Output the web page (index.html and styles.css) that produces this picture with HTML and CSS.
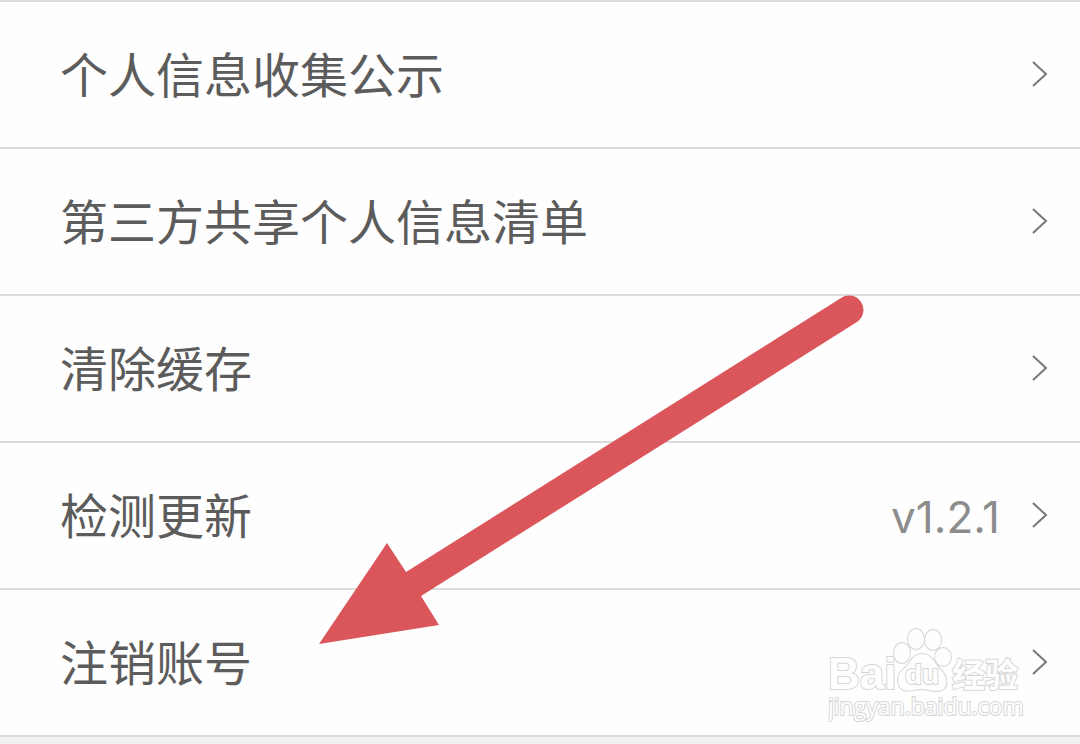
FILE: index.html
```html
<!DOCTYPE html>
<html lang="zh-CN">
<head>
	<meta charset="UTF-8">
	<meta name="viewport" content="width=device-width, initial-scale=1">
	<title>设置</title>
	<link rel="stylesheet" href="styles.css">
</head>
<body>
	<main class="settings">
		<nav class="list">
			<a class="row" href="#collect">
				<span class="label">个人信息收集公示</span>
				<svg class="chevron" viewBox="0 0 18 28"><path d="M3 2 L16 14 L3 26"/></svg>
			</a>
			<a class="row" href="#share">
				<span class="label">第三方共享个人信息清单</span>
				<svg class="chevron" viewBox="0 0 18 28"><path d="M3 2 L16 14 L3 26"/></svg>
			</a>
			<a class="row" href="#cache">
				<span class="label">清除缓存</span>
				<svg class="chevron" viewBox="0 0 18 28"><path d="M3 2 L16 14 L3 26"/></svg>
			</a>
			<a class="row" href="#update">
				<span class="label">检测更新</span>
				<span class="version">v1.2.1</span>
				<svg class="chevron" viewBox="0 0 18 28"><path d="M3 2 L16 14 L3 26"/></svg>
			</a>
			<a class="row" href="#cancel">
				<span class="label">注销账号</span>
				<svg class="chevron" viewBox="0 0 18 28"><path d="M3 2 L16 14 L3 26"/></svg>
			</a>
		</nav>

		<!-- arrow pointing at the last row -->
		<svg class="arrow" viewBox="0 0 546 350">
			<path d="M1 349 L69 248 L88 277 L523 3 A14 14 0 0 1 539 27 L103 301 L121 330 Z"/>
		</svg>

		<svg class="watermark" viewBox="0 0 200 96">
			<g class="mark">
				<text class="brand" x="0" y="62">Bai</text>
				<ellipse cx="74" cy="26" rx="8" ry="10"/>
				<ellipse cx="88" cy="12" rx="8" ry="10"/>
				<ellipse cx="105" cy="13" rx="8" ry="10"/>
				<ellipse cx="115" cy="30" rx="8" ry="9"/>
				<path d="M94 27 C84 27 82 37 76 42 C68 47 68 60 76 63 C82 65 88 62 94 62 C100 62 107 66 114 63 C121 59 119 48 112 42 C106 36 104 27 94 27 Z"/>
				<text class="du" x="77" y="57">du</text>
				<text class="cjk" x="124" y="60">经验</text>
				<text class="site" x="0" y="88">jingyan.baidu.com</text>
			</g>
		</svg>
	</main>
</body>
</html>
```
FILE: styles.css
```css
* {
	box-sizing: border-box;
}

body {
	margin: 0;
	background-color: #f1f1f1;
	font-family: "Noto Sans CJK SC", sans-serif;
}

.settings {
	position: relative;
}

.list {
	background-color: #fefefe;
	border-top: 2px solid #dcdcdc;
}

.row {
	display: flex;
	align-items: center;
	padding: 37px 32px 38px 60px;
	border-bottom: 2px solid #dcdcdc;
	color: #5c5c5c;
	text-decoration: none;
}

.label {
	flex: 1;
	padding-bottom: 4px;
	font-size: 48px;
	line-height: 66px;
}

.version {
	margin-right: 30px;
	padding-top: 4px;
	color: #8c8c8c;
	font-family: Inter, sans-serif;
	font-size: 44px;
	line-height: 66px;
}

.chevron {
	width: 18px;
	height: 28px;
	fill: none;
	stroke: #777;
	stroke-width: 2;
}

.arrow {
	position: absolute;
	left: 318px;
	top: 295px;
	width: 546px;
	height: 350px;
	fill: #db565b;
	pointer-events: none;
}

.watermark {
	position: absolute;
	right: 52px;
	bottom: 14px;
	width: 200px;
	height: 96px;
	pointer-events: none;
}

.mark {
	fill: #fefefe;
	stroke: #d6d6d6;
	stroke-width: 2;
	paint-order: stroke;
}

.brand {
	font: bold 44px "Liberation Sans", sans-serif;
}

.du {
	font: bold 28px "Liberation Sans", sans-serif;
}

.cjk {
	font: bold 33px "Noto Sans CJK SC", sans-serif;
}

.site {
	font: 23px "Open Sans", sans-serif;
}
```
